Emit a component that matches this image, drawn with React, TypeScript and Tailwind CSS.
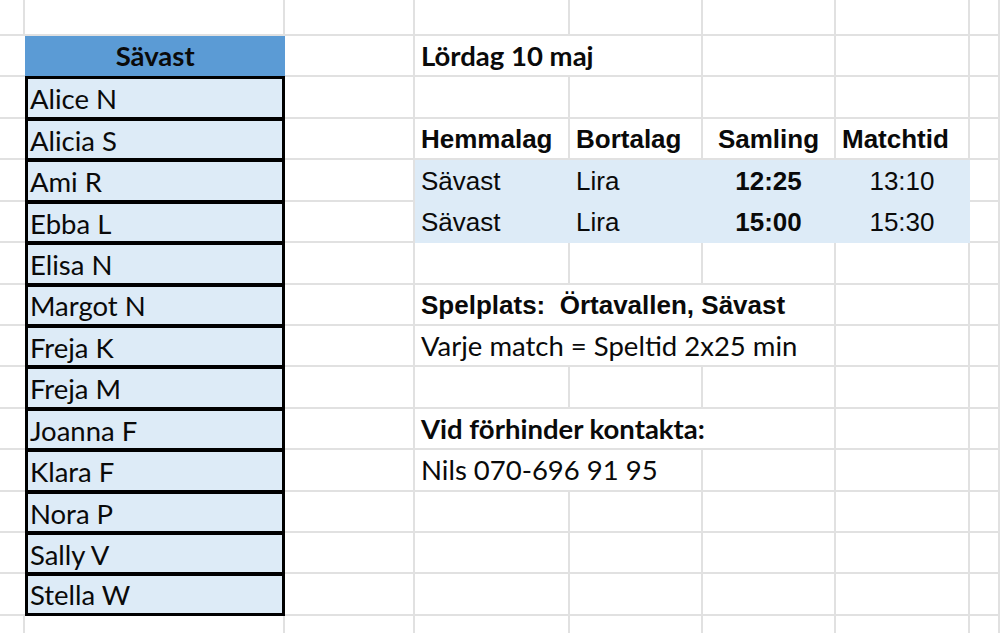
import React from 'react'

// Spreadsheet screenshot: a name list on the left, a match schedule on the right.

type Font = 'cal' | 'arial'

interface CellSpec {
  text?: string
  font?: Font
  bold?: boolean
  align?: 'left' | 'center'
  span?: number // overflowing text hides the gridlines it runs across
}

const names = [
  'Alice N',
  'Alicia S',
  'Ami R',
  'Ebba L',
  'Elisa N',
  'Margot N',
  'Freja K',
  'Freja M',
  'Joanna F',
  'Klara F',
  'Nora P',
  'Sally V',
  'Stella W',
]

// right-hand columns D..G, keyed by sheet row
const right: Record<number, CellSpec[]> = {
  1: [{ text: 'Lördag 10 maj', font: 'cal', bold: true, span: 2 }],
  3: [
    { text: 'Hemmalag', font: 'arial', bold: true },
    { text: 'Bortalag', font: 'arial', bold: true },
    { text: 'Samling', font: 'arial', bold: true, align: 'center' },
    { text: 'Matchtid', font: 'arial', bold: true },
  ],
  4: [
    { text: 'Sävast', font: 'arial' },
    { text: 'Lira', font: 'arial' },
    { text: '12:25', font: 'arial', bold: true, align: 'center' },
    { text: '13:10', font: 'arial', align: 'center' },
  ],
  5: [
    { text: 'Sävast', font: 'arial' },
    { text: 'Lira', font: 'arial' },
    { text: '15:00', font: 'arial', bold: true, align: 'center' },
    { text: '15:30', font: 'arial', align: 'center' },
  ],
  7: [{ text: 'Spelplats:  Örtavallen, Sävast', font: 'arial', bold: true, span: 3 }],
  8: [{ text: 'Varje match = Speltid 2x25 min', font: 'cal', span: 3 }],
  10: [{ text: 'Vid förhinder kontakta:', font: 'cal', bold: true, span: 3 }],
  11: [{ text: 'Nils 070-696 91 95', font: 'cal', span: 2 }],
}

const colPx = [155, 133, 133, 134]
const widthCls: Record<number, string> = {
  155: 'w-[155px]',
  133: 'w-[133px]',
  134: 'w-[134px]',
  288: 'w-[288px]',
  421: 'w-[421px]',
}

function CellText({ spec }: { spec: CellSpec }) {
  if (!spec.text) return null
  const fontCls =
    spec.font === 'arial'
      ? "font-['Liberation_Sans',Arial,sans-serif] text-[26px] pb-[6px]"
      : "font-['Lato',sans-serif] text-[27.5px] pb-[6px]"
  return (
    <span
      className={`${fontCls} ${spec.bold ? 'font-bold' : 'font-normal'} leading-none whitespace-pre text-[#0a0a0a]`}
    >
      {spec.text}
    </span>
  )
}

function RightCells({ index, last }: { index: number; last: boolean }) {
  const isBand = index === 4 || index === 5
  const specs = right[index] ?? []
  const cells: React.ReactNode[] = []
  let col = 0
  let k = 0
  while (col < colPx.length) {
    const spec = specs[k] ?? {}
    const span = spec.span ?? 1
    const px = colPx.slice(col, col + span).reduce((a, b) => a + b, 0)
    cells.push(
      <div
        key={col}
        className={`${widthCls[px]} h-full shrink-0 border-r-2 ${last ? '' : 'border-b-2'} flex items-end ${
          spec.align === 'center' ? 'justify-center' : 'pl-[6px]'
        } ${isBand ? 'bg-[#ddebf7] border-[#ddebf7]' : 'border-[#e1e1e1]'}`}
      >
        <CellText spec={spec} />
      </div>
    )
    col += span
    k += 1
  }
  return <>{cells}</>
}

function Row({ index, height }: { index: number; height: string }) {
  const inNames = index >= 1 && index <= 14
  const last = index === 15
  const bottom = last ? '' : 'border-b-2'

  let colB: React.ReactNode
  if (index === 1) {
    colB = (
      <div className="w-[261px] h-full bg-[#5b9bd5] border-b border-black flex items-end justify-center">
        <span className="font-['Lato',sans-serif] text-[27.5px] font-bold leading-none pb-[7px] text-[#0a0a0a]">
          Sävast
        </span>
      </div>
    )
  } else if (inNames) {
    colB = (
      <div
        className={`w-[261px] h-full bg-[#ddebf7] border-x-[3px] border-t-2 border-black flex items-end pl-[2px] ${
          index === 14 ? 'border-b-[3px]' : 'border-b-2'
        }`}
      >
        <span className="font-['Lato',sans-serif] text-[27.5px] leading-none pb-[4px] text-[#0a0a0a]">
          {names[index - 2]}
        </span>
      </div>
    )
  } else {
    colB = <div className={`w-[261px] h-full border-r-2 ${bottom} border-[#e1e1e1]`} />
  }

  return (
    <div className={`flex ${height}`}>
      <div
        className={`w-[25px] h-full ${bottom} border-[#e1e1e1] ${inNames ? '' : 'border-r-2'}`}
      />
      {colB}
      <div className={`w-[130px] h-full border-r-2 ${bottom} border-[#e1e1e1]`} />
      <RightCells index={index} last={last} />
      <div className={`w-[30px] h-full shrink-0 border-r-2 ${bottom} border-[#e1e1e1]`} />
    </div>
  )
}

export default function App() {
  const rows = Array.from({ length: 16 }, (_, i) => i)
  return (
    <div className="w-[1000px] h-[633px] overflow-hidden bg-white">
      {rows.map((i) => (
        <Row
          key={i}
          index={i}
          height={i === 0 ? 'h-[36px]' : i === 15 ? 'h-[17px]' : 'h-[41.43px]'}
        />
      ))}
    </div>
  )
}
